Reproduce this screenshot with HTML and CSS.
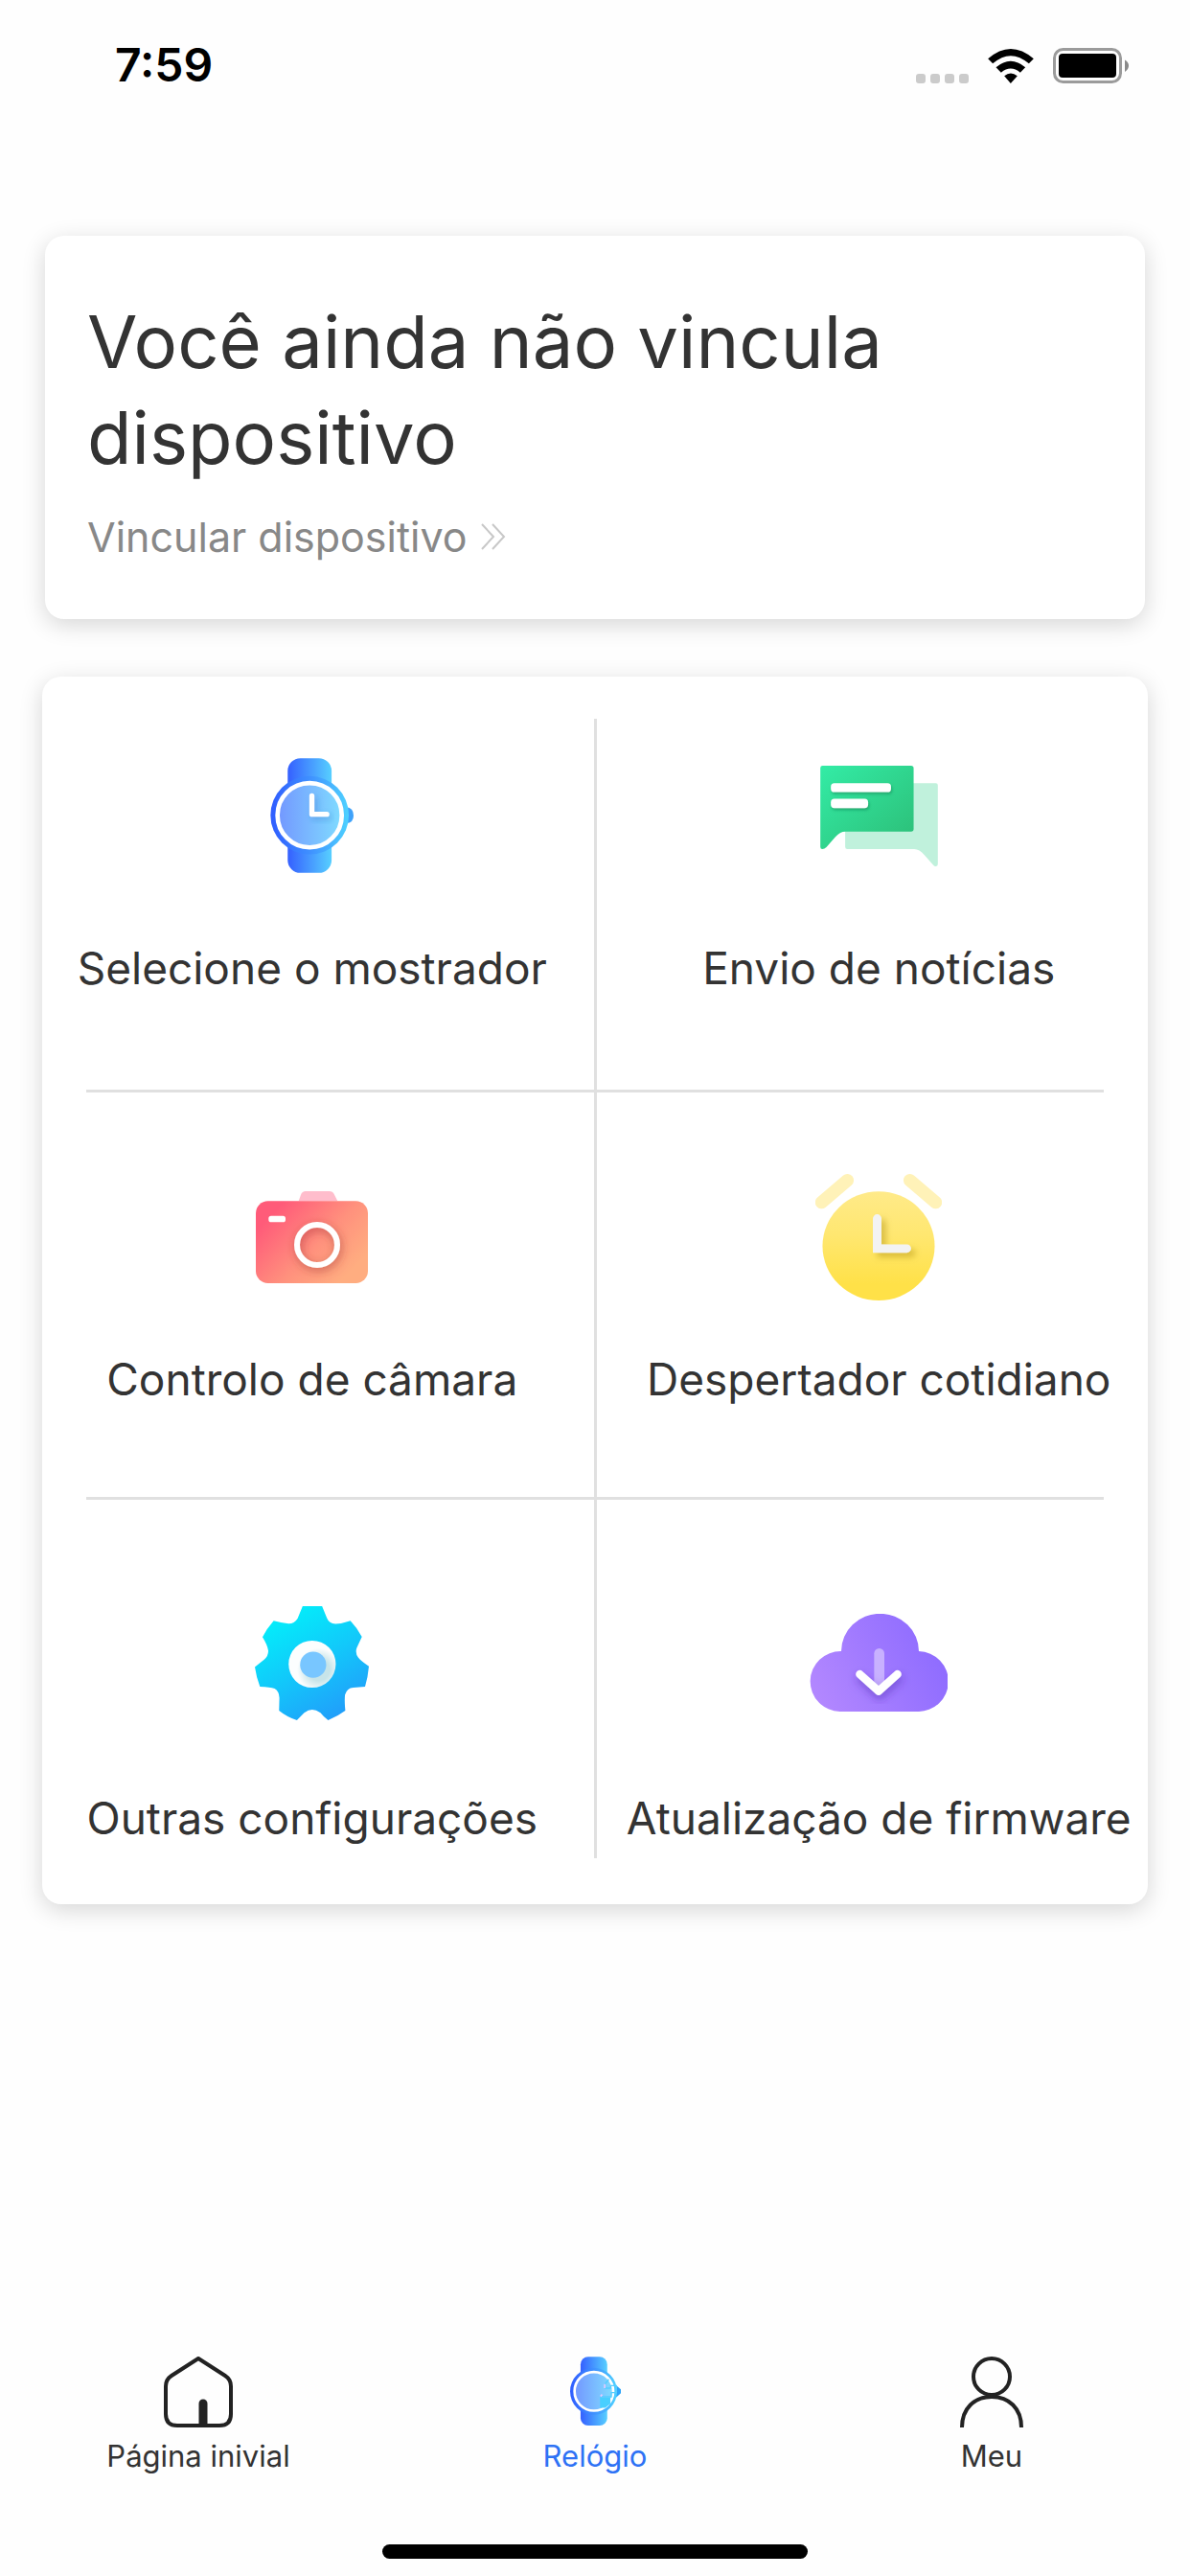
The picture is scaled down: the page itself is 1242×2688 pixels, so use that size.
FILE: index.html
```html
<!DOCTYPE html>
<html lang="pt">
<head>
<meta charset="utf-8">
<meta name="viewport" content="width=device-width, initial-scale=1">
<title>Relógio</title>
<link rel="stylesheet" href="styles.css">
</head>
<body>
<header class="status">
  <time class="status-time">7:59</time>
  <div class="status-icons">
    <svg width="55" height="10" viewBox="0 0 55 10" fill="#cbcbcb" aria-hidden="true"><rect width="10" height="10" rx="3"/><rect x="15" width="10" height="10" rx="3"/><rect x="30" width="10" height="10" rx="3"/><rect x="45" width="10" height="10" rx="3"/></svg>
    <svg class="wifi" width="48" height="36" viewBox="305 57 143 108" aria-hidden="true"><path d="M305 88Q376 26 448 88L433 103Q376 54 320 103Z"/><path d="M330 115Q376 76 422 115L406 131Q376 106 346 131Z"/><path d="M356 142Q376 125 397 142L376 165Z"/></svg>
    <svg width="79" height="37" viewBox="0 0 79 37" aria-hidden="true"><rect x="1.5" y="1.5" width="69" height="34" rx="9" fill="none" stroke="#9b9b9b" stroke-width="3"/><rect x="6" y="6" width="60" height="25" rx="4"/><path d="M75 12.500Q79 15 79 18.500T75 25Z" fill="#8a8a8a"/></svg>
  </div>
</header>

<main class="content">
  <section class="card bind">
    <h1 class="bind-title">Você ainda não vincula dispositivo</h1>
    <a class="bind-link" href="#vincular">Vincular dispositivo
      <svg width="26" height="28" viewBox="0 0 26 28" fill="none" stroke="#c8c8c8" stroke-width="2" aria-hidden="true"><path d="M1 1L13 14L1 27M12 1L24 14L12 27"/></svg>
    </a>
  </section>

  <section class="card tiles">
    <span class="line-v"></span>
    <button class="tile row-1 left" type="button">
      <span class="tile-icon"><svg width="87" height="120" viewBox="125 93 262 360" aria-hidden="true">
        <defs>
          <linearGradient id="strap"><stop offset="0" stop-color="#3560ff"/><stop offset="1" stop-color="#57cfff"/></linearGradient>
          <linearGradient id="case"><stop offset="0" stop-color="#2f5cff"/><stop offset=".5" stop-color="#3f90ff"/><stop offset="1" stop-color="#4ed2ff"/></linearGradient>
          <linearGradient id="face"><stop offset="0" stop-color="#7397ff"/><stop offset="1" stop-color="#80dcff"/></linearGradient>
          <filter id="soft" x="-50%" y="-50%" width="200%" height="200%"><feDropShadow dx="8" dy="9" stdDeviation="9" flood-color="#2878c8" flood-opacity=".4"/></filter>
        </defs>
        <rect x="180" y="93" width="138" height="360" rx="40" fill="url(#strap)"/>
        <path d="M364 247Q387 249 387 273T364 297Z" fill="#3fa2fa"/>
        <circle cx="249" cy="272" r="123" fill="url(#case)"/>
        <circle cx="249" cy="272" r="101" fill="url(#face)" stroke="#fff" stroke-width="14"/>
        <path d="M256 211V269H303" fill="none" stroke="#fff" stroke-width="16" stroke-linecap="round" stroke-linejoin="round" filter="url(#soft)"/>
      </svg></span>
      <span class="tile-label">Selecione o mostrador</span>
    </button>
    <button class="tile row-1 right" type="button">
      <span class="tile-icon"><svg width="123" height="105" viewBox="75 83 369 316" aria-hidden="true">
        <defs>
          <linearGradient id="green" x1="0" y1="0" x2="1" y2="1"><stop offset="0" stop-color="#33eca6"/><stop offset="1" stop-color="#2cbd76"/></linearGradient>
          <filter id="greenShade" x="-20%" y="-20%" width="140%" height="160%"><feDropShadow dx="3" dy="6" stdDeviation="5" flood-color="#107848" flood-opacity=".5"/></filter>
        </defs>
        <path d="M153 138H438Q444 138 444 144V392Q444 399 437 399Q433 399 430 395L402 364Q386 345 370 345H160Q153 345 153 338Z" fill="#c0f1dc"/>
        <path d="M75 90Q75 83 82 83H360Q368 83 368 91V282Q368 290 360 290H153Q138 290 123 306L94 339Q88 345 81 345Q75 345 75 338Z" fill="url(#green)"/>
        <g fill="#fff" filter="url(#greenShade)"><rect x="108" y="138" width="189" height="28" rx="11"/><rect x="108" y="187" width="117" height="29" rx="11"/></g>
      </svg></span>
      <span class="tile-label">Envio de notícias</span>
    </button>
    <span class="line-h first"></span>
    <button class="tile row-2 left" type="button">
      <span class="tile-icon"><svg width="117" height="96" viewBox="81 69 351 288" aria-hidden="true">
        <defs>
          <linearGradient id="coral" x1="0" y1=".15" x2="1" y2=".85"><stop offset=".1" stop-color="#ff5b79"/><stop offset=".55" stop-color="#ff917d"/><stop offset=".9" stop-color="#ffad80"/></linearGradient>
          <filter id="lens" x="-50%" y="-50%" width="200%" height="200%"><feDropShadow dx="4" dy="9" stdDeviation="15" flood-color="#a03030" flood-opacity=".6"/></filter>
        </defs>
        <path d="M215 100L222 80Q226 69 237 69H311Q322 69 326 78L337 100Z" fill="#ffbdcc"/>
        <rect x="81" y="100" width="351" height="257" rx="38" fill="url(#coral)"/>
        <rect x="121" y="146" width="53" height="20" rx="8" fill="#fff"/>
        <circle cx="273" cy="237" r="63" fill="none" stroke="#fff" stroke-width="18" filter="url(#lens)"/>
      </svg></span>
      <span class="tile-label">Controlo de câmara</span>
    </button>
    <button class="tile row-2 right" type="button">
      <span class="tile-icon"><svg width="132" height="132" viewBox="63 77 396 397" aria-hidden="true">
        <defs>
          <linearGradient id="sun" x1="0" y1="0" x2="0" y2="1"><stop offset="0" stop-color="#ffea89"/><stop offset=".4" stop-color="#ffe770"/><stop offset=".85" stop-color="#ffe148"/></linearGradient>
          <filter id="hands" x="-50%" y="-50%" width="200%" height="200%"><feDropShadow dx="14" dy="14" stdDeviation="10" flood-color="#a08010" flood-opacity=".4"/></filter>
        </defs>
        <path d="M82 166L163 97M359 97L440 166" stroke="#fff2b8" stroke-width="40" stroke-linecap="round"/>
        <ellipse cx="261" cy="303" rx="176" ry="171" fill="url(#sun)"/>
        <path d="M243 217A13 13 0 0 1 270 217V298H350A13 13 0 0 1 350 324H243Z" fill="#f3f3f3" filter="url(#hands)"/>
      </svg></span>
      <span class="tile-label">Despertador cotidiano</span>
    </button>
    <span class="line-h second"></span>
    <button class="tile row-3 left" type="button">
      <span class="tile-icon"><svg width="119" height="119" viewBox="78 77 358 358" aria-hidden="true">
        <defs>
          <linearGradient id="aqua" x1=".2" y1=".05" x2=".75" y2="1"><stop offset="0" stop-color="#02f0fa"/><stop offset=".5" stop-color="#12c8fa"/><stop offset="1" stop-color="#229bfa"/></linearGradient>
          <radialGradient id="hub" cx=".64" cy=".62" r=".46"><stop offset=".5" stop-color="#c7e4e9"/><stop offset="1" stop-color="#fcfefe"/></radialGradient>
        </defs>
        <path d="M228 77H289L304 114Q311 132 331 133Q352 132 378 123Q399 145 414 173L398 208Q392 224 403 239Q412 250 436 266Q433 300 424 330L387 333Q368 334 361 355Q359 375 362 405Q338 423 308 435Q294 425 284 412Q270 402 258 402Q246 402 233 412L210 435Q180 426 154 405L155 365Q154 344 140 336Q126 331 94 330Q83 302 78 268L108 244Q121 232 120 216Q117 198 102 174Q115 148 137 123Q160 129 184 132Q202 132 212 116Z" fill="url(#aqua)"/>
        <circle cx="258" cy="259" r="74" fill="url(#hub)"/>
        <circle cx="261" cy="261" r="41" fill="#78c6ff"/>
      </svg></span>
      <span class="tile-label">Outras configurações</span>
    </button>
    <button class="tile row-3 right" type="button">
      <span class="tile-icon"><svg width="144" height="102" viewBox="45 69 432 306" aria-hidden="true">
        <defs>
          <linearGradient id="violet" x1="0" y1=".7" x2="1" y2=".35"><stop offset="0" stop-color="#b287ff"/><stop offset="1" stop-color="#8c6aff"/></linearGradient>
          <filter id="arrow" x="-50%" y="-50%" width="200%" height="220%"><feDropShadow dx="3" dy="14" stdDeviation="12" flood-color="#5028b0" flood-opacity=".5"/></filter>
        </defs>
        <path d="M140 375A95 94.500 0 0 1 144 186A121 117 0 0 1 387 186A94.500 94.500 0 0 1 383 375Z" fill="url(#violet)"/>
        <path d="M263 193V290" stroke="#c8b1ff" stroke-width="32" stroke-linecap="round"/>
        <path d="M202 258L261 311L320 258" fill="none" stroke="#fff" stroke-width="25" stroke-linecap="round" stroke-linejoin="round" filter="url(#arrow)"/>
      </svg></span>
      <span class="tile-label">Atualização de firmware</span>
    </button>
  </section>
</main>

<nav class="tabs">
  <a class="tab" href="#inicio">
    <svg width="72" height="74" viewBox="0 0 72 74" fill="none" stroke="#222" aria-hidden="true"><path d="M36 2L64 20Q70 24 70 31V60Q70 72 58 72H14Q2 72 2 60V31Q2 24 8 20Z" stroke-width="4" stroke-linejoin="round"/><path d="M41 49V72" stroke-width="9" stroke-linecap="round"/></svg>
    <span>Página inivial</span>
  </a>
  <a class="tab active" href="#relogio" aria-current="page">
    <svg width="53" height="74" viewBox="102 59 160 222" aria-hidden="true">
      <rect x="135" y="59" width="84" height="217" rx="24" fill="url(#strap)"/>
      <path d="M246 148L262 162V174L246 188Z" fill="#2da4fa"/>
      <circle cx="176" cy="168" r="74" fill="url(#case)"/>
      <circle cx="177" cy="168" r="61" fill="url(#face)" stroke="#fff" stroke-width="8"/>
      <path d="M198 220V185H232V172H248V150H230V158H212V145L224 130" fill="none" stroke="#55cdff" stroke-width="4"/>
      <path d="M198 188H229V207L213 220H198Z" fill="#48cfff"/>
      <path d="M211 145V158M198 184L203 178" stroke="#e3c8ff" stroke-width="5"/>
    </svg>
    <span>Relógio</span>
  </a>
  <a class="tab" href="#meu">
    <svg width="66" height="74" viewBox="0 0 66 74" fill="none" stroke="#222" stroke-width="4" aria-hidden="true"><circle cx="33" cy="21" r="19"/><path d="M2 74C2 54 15 42 33 42S64 54 64 74"/></svg>
    <span>Meu</span>
  </a>
</nav>
<div class="home-bar"></div>
</body>
</html>
```
FILE: styles.css
```css
* {
  box-sizing: border-box;
}

body {
  margin: 0;
  min-height: 100vh;
  display: flex;
  flex-direction: column;
  background: #fefefe;
  color: #333;
  font-family: Inter, "Liberation Sans", sans-serif;
}

svg {
  display: block;
  flex: none;
}

.status {
  display: flex;
  justify-content: space-between;
  align-items: center;
  height: 132px;
  padding: 4px 64px 0 120px;
  color: #000;
}

.status-time {
  font-size: 48px;
  line-height: 60px;
  font-weight: 600;
}

.status-icons {
  display: flex;
  align-items: flex-end;
  gap: 20px;
}

.content {
  display: flex;
  flex-direction: column;
  gap: 60px;
  padding: 114px 44px 0;
}

.card {
  background: #fff;
  border-radius: 20px;
  box-shadow: 0 6px 24px rgba(0, 0, 0, 0.16);
}

.bind {
  margin: 0 3px;
  padding: 60px 44px 56px;
}

.bind-title {
  margin: 0;
  font-size: 76px;
  line-height: 100px;
  font-weight: 400;
}

.bind-link {
  display: flex;
  align-items: center;
  gap: 14px;
  margin-top: 24px;
  font-size: 43px;
  line-height: 60px;
  color: #888;
  text-decoration: none;
}

.tiles {
  display: grid;
  grid-template-columns: 1fr 3px 1fr;
  grid-template-rows: auto 3px auto 3px auto;
  padding: 44px 0 48px;
}

.line-v {
  grid-column: 2;
  grid-row: 1 / -1;
  background: #e0e0e0;
}

.line-h {
  grid-column: 1 / -1;
  margin: 0 46px;
  background: #e0e0e0;
}

.first {
  grid-row: 2;
}

.second {
  grid-row: 4;
}

.tile {
  display: flex;
  flex-direction: column;
  align-items: center;
  border: 0;
  background: none;
  color: inherit;
  font: inherit;
}

.left {
  grid-column: 1;
}

.right {
  grid-column: 3;
}

.row-1 {
  grid-row: 1;
  gap: 57px;
  padding: 29px 0 97px;
}

.row-2 {
  grid-row: 3;
  gap: 46px;
  padding: 79px 0 93px;
}

.row-3 {
  grid-row: 5;
  gap: 60px;
  padding: 98px 0 12px;
}

.tile.left {
  padding-right: 12px;
}

.tile.right {
  padding-left: 14px;
}

.tile-icon {
  display: flex;
  align-items: center;
  height: 144px;
}

.tile-label {
  font-size: 46px;
  line-height: 60px;
  white-space: nowrap;
}

.tabs {
  display: grid;
  grid-template-columns: repeat(3, 1fr);
  margin-top: auto;
  padding-bottom: 72px;
}

.tab {
  display: flex;
  flex-direction: column;
  align-items: center;
  gap: 10px;
  color: #333;
  font-size: 31px;
  line-height: 40px;
  text-decoration: none;
}

.active {
  color: #2e72f5;
}

.home-bar {
  align-self: center;
  width: 444px;
  max-width: 40%;
  height: 15px;
  margin-bottom: 18px;
  border-radius: 8px;
  background: #000;
}
```
